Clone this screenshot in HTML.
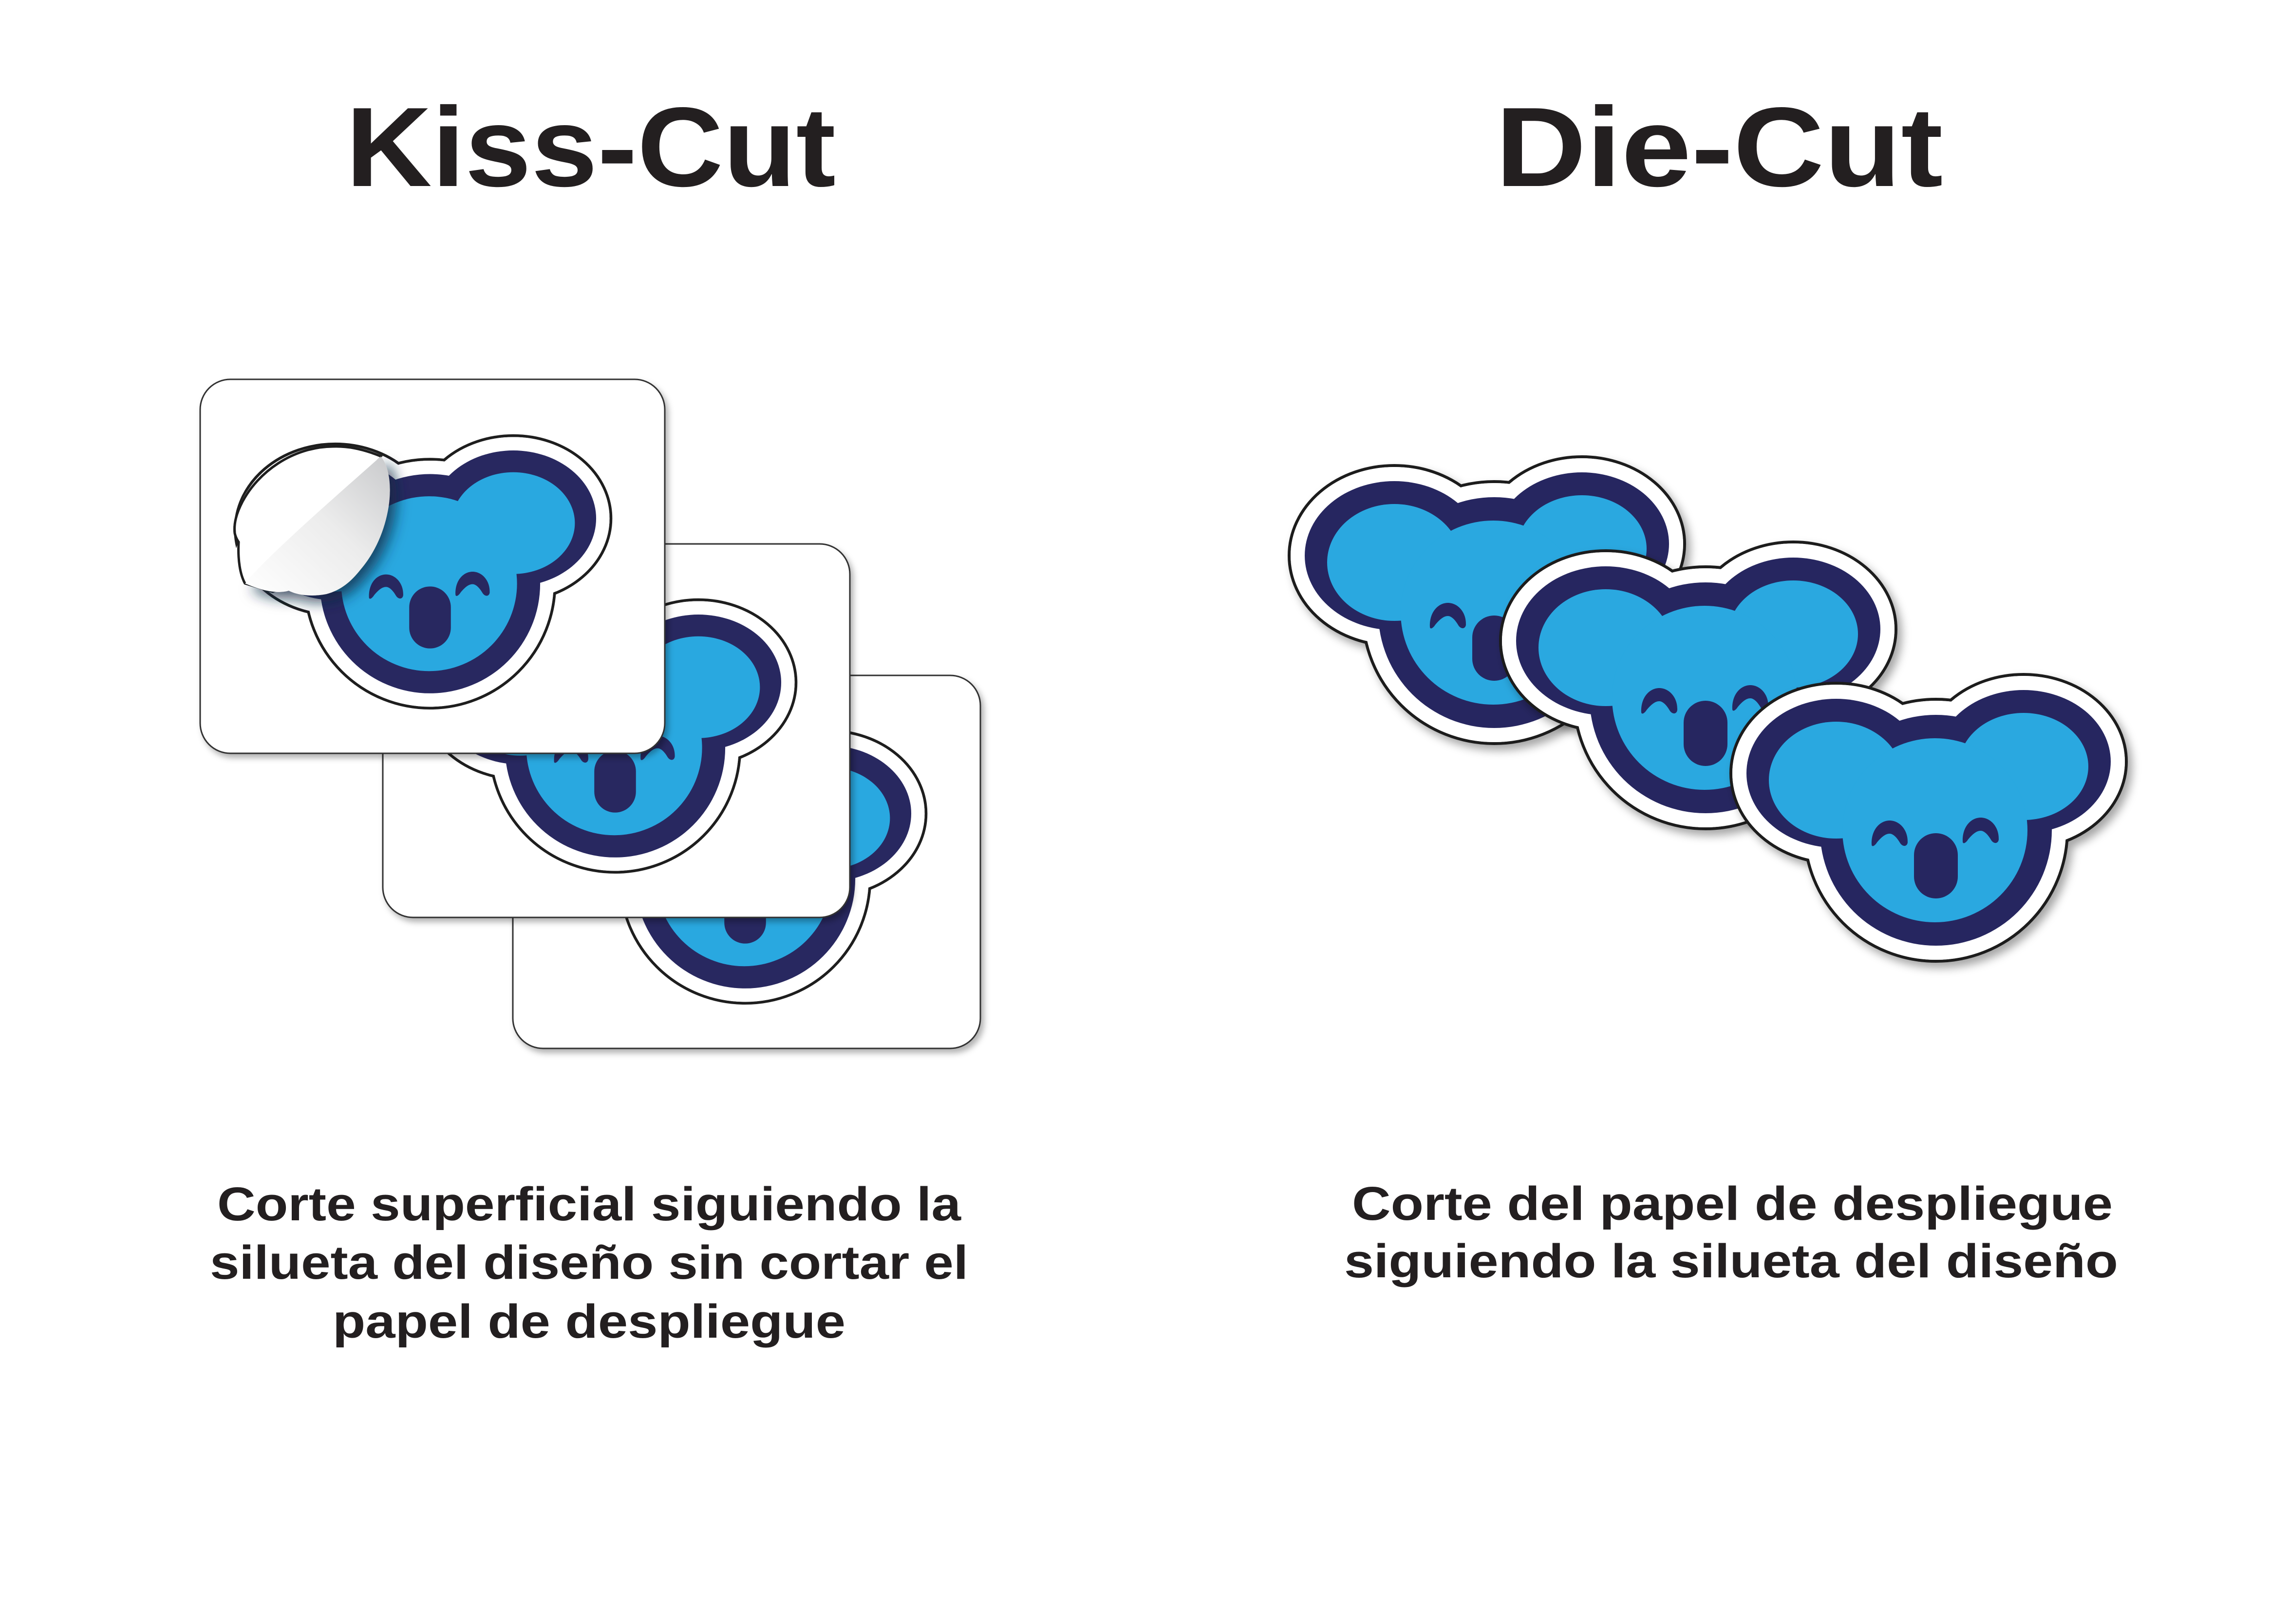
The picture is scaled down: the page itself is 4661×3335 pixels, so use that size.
<!DOCTYPE html>
<html><head><meta charset="utf-8"><style>
html,body{margin:0;padding:0;background:#fff}
svg{display:block}
</style></head><body>
<svg width="4661" height="3335" viewBox="0 0 4661 3335" xmlns="http://www.w3.org/2000/svg">
<defs>
<filter id="sh" x="-20%" y="-20%" width="150%" height="150%">
<feDropShadow dx="9" dy="11" stdDeviation="9" flood-color="#000" flood-opacity="0.35"/>
</filter>
<filter id="csh" x="-10%" y="-10%" width="130%" height="130%">
<feDropShadow dx="6" dy="8" stdDeviation="6" flood-color="#000" flood-opacity="0.3"/>
</filter>
<filter id="fsh" x="-30%" y="-30%" width="170%" height="170%">
<feDropShadow dx="14" dy="14" stdDeviation="14" flood-color="#0a2a40" flood-opacity="0.75"/>
</filter>
<linearGradient id="flap" x1="1" y1="0" x2="0" y2="1">
<stop offset="0" stop-color="#c9cacc"/>
<stop offset="0.45" stop-color="#ececec"/>
<stop offset="1" stop-color="#ffffff"/>
</linearGradient>
<g id="k">
<g fill="#fff" stroke="#1e1e1e" stroke-width="6">
<ellipse cx="-205" cy="-190" rx="216" ry="185"/>
<ellipse cx="180" cy="-214" rx="211" ry="179"/>
<ellipse cx="0" cy="-73" rx="270" ry="269"/>
</g>
<g fill="#fff">
<ellipse cx="-205" cy="-190" rx="213" ry="182"/>
<ellipse cx="180" cy="-214" rx="208" ry="176"/>
<ellipse cx="0" cy="-73" rx="267" ry="266"/>
</g>
<g fill="#282860">
<ellipse cx="-205" cy="-190" rx="184" ry="153"/>
<ellipse cx="180" cy="-214" rx="179" ry="147"/>
<ellipse cx="0" cy="-73" rx="238" ry="237"/>
</g>
<g fill="#29a8e0">
<ellipse cx="-205" cy="-176" rx="138" ry="120"/>
<ellipse cx="180" cy="-204" rx="133" ry="110"/>
<ellipse cx="-2" cy="-73" rx="190" ry="189"/>
</g>
<g fill="#282860">
<rect x="-45" y="-67" width="90" height="134" rx="45" ry="45"/>
<path transform="translate(-95,-66)" d="M-37,22 C-38,-8 -20,-27 0,-27 C20,-27 38,-8 37,18 C36,26 28,28 22,20 C14,6 6,0 0,0 C-8,0 -16,6 -26,18 C-31,26 -37,28 -37,22Z"/>
<path transform="translate(92,-72)" d="M-37,22 C-38,-8 -20,-27 0,-27 C20,-27 38,-8 37,18 C36,26 28,28 22,20 C14,6 6,0 0,0 C-8,0 -16,6 -26,18 C-31,26 -37,28 -37,22Z"/>
</g>
</g>
</defs>

<rect width="4661" height="3335" fill="#fff"/>

<g font-family="'Liberation Sans', sans-serif" font-weight="bold" fill="#231f20">
<text x="1213" y="382" font-size="232" text-anchor="middle" textLength="1006" lengthAdjust="spacingAndGlyphs">Kiss-Cut</text>
<text x="3530" y="382" font-size="232" text-anchor="middle" textLength="919" lengthAdjust="spacingAndGlyphs">Die-Cut</text>
<g font-size="97">
<text x="446" y="2506" textLength="1527" lengthAdjust="spacingAndGlyphs">Corte superficial siguiendo la</text>
<text x="431" y="2626" textLength="1557" lengthAdjust="spacingAndGlyphs">silueta del diseño sin cortar el</text>
<text x="683" y="2747" textLength="1053" lengthAdjust="spacingAndGlyphs">papel de despliegue</text>
<text x="2776" y="2505" textLength="1562" lengthAdjust="spacingAndGlyphs">Corte del papel de despliegue</text>
<text x="2760" y="2623" textLength="1589" lengthAdjust="spacingAndGlyphs">siguiendo la silueta del diseño</text>
</g>
</g>

<!-- Kiss cut -->
<rect x="1053" y="1387" width="960" height="766" rx="62" fill="#fff" stroke="#333" stroke-width="3" filter="url(#csh)"/>
<use href="#k" transform="translate(1530,1874) scale(0.95)"/>
<rect x="786" y="1117" width="959" height="767" rx="62" fill="#fff" stroke="#333" stroke-width="3" filter="url(#csh)"/>
<use href="#k" transform="translate(1263,1605) scale(0.95)"/>
<rect x="411" y="779" width="954" height="768" rx="62" fill="#fff" stroke="#333" stroke-width="3" filter="url(#csh)"/>
<use href="#k" transform="translate(883,1268) scale(0.95)"/>

<!-- peel -->
<path d="M782,937 C740,920 710,916 683,917 C600,918 530,970 498,1030 C485,1055 480,1075 482,1095 C484,1105 490,1113 490,1113 C488,1150 493,1180 503,1198 L560,1215 L600,1200 Z" fill="#fff" stroke="#1e1e1e" stroke-width="5"/>
<path d="M782,937 C800,960 804,1000 798,1040 C790,1090 770,1135 740,1170 C720,1195 700,1212 670,1220 C640,1226 610,1222 593,1213 C570,1220 537,1213 503,1198 C550,1140 700,1010 782,937 Z" fill="url(#flap)" filter="url(#fsh)"/>
<path d="M782,937 C700,1010 550,1140 503,1198 C470,1170 482,1130 490,1113 C485,1100 482,1080 485,1060 C500,990 580,920 683,917 C720,917 760,925 782,937 Z" fill="#fff"/>
<path d="M782,937 C740,920 710,916 683,917 C600,918 530,970 498,1030 C485,1055 480,1075 482,1095 C484,1105 490,1113 490,1113 C488,1150 493,1180 503,1198" fill="none" stroke="#1e1e1e" stroke-width="5"/>

<!-- Die cut -->
<g filter="url(#sh)"><use href="#k" transform="translate(3068,1331)"/></g>
<g filter="url(#sh)"><use href="#k" transform="translate(3502,1506)"/></g>
<g filter="url(#sh)"><use href="#k" transform="translate(3975,1778)"/></g>
</svg>
</body></html>
